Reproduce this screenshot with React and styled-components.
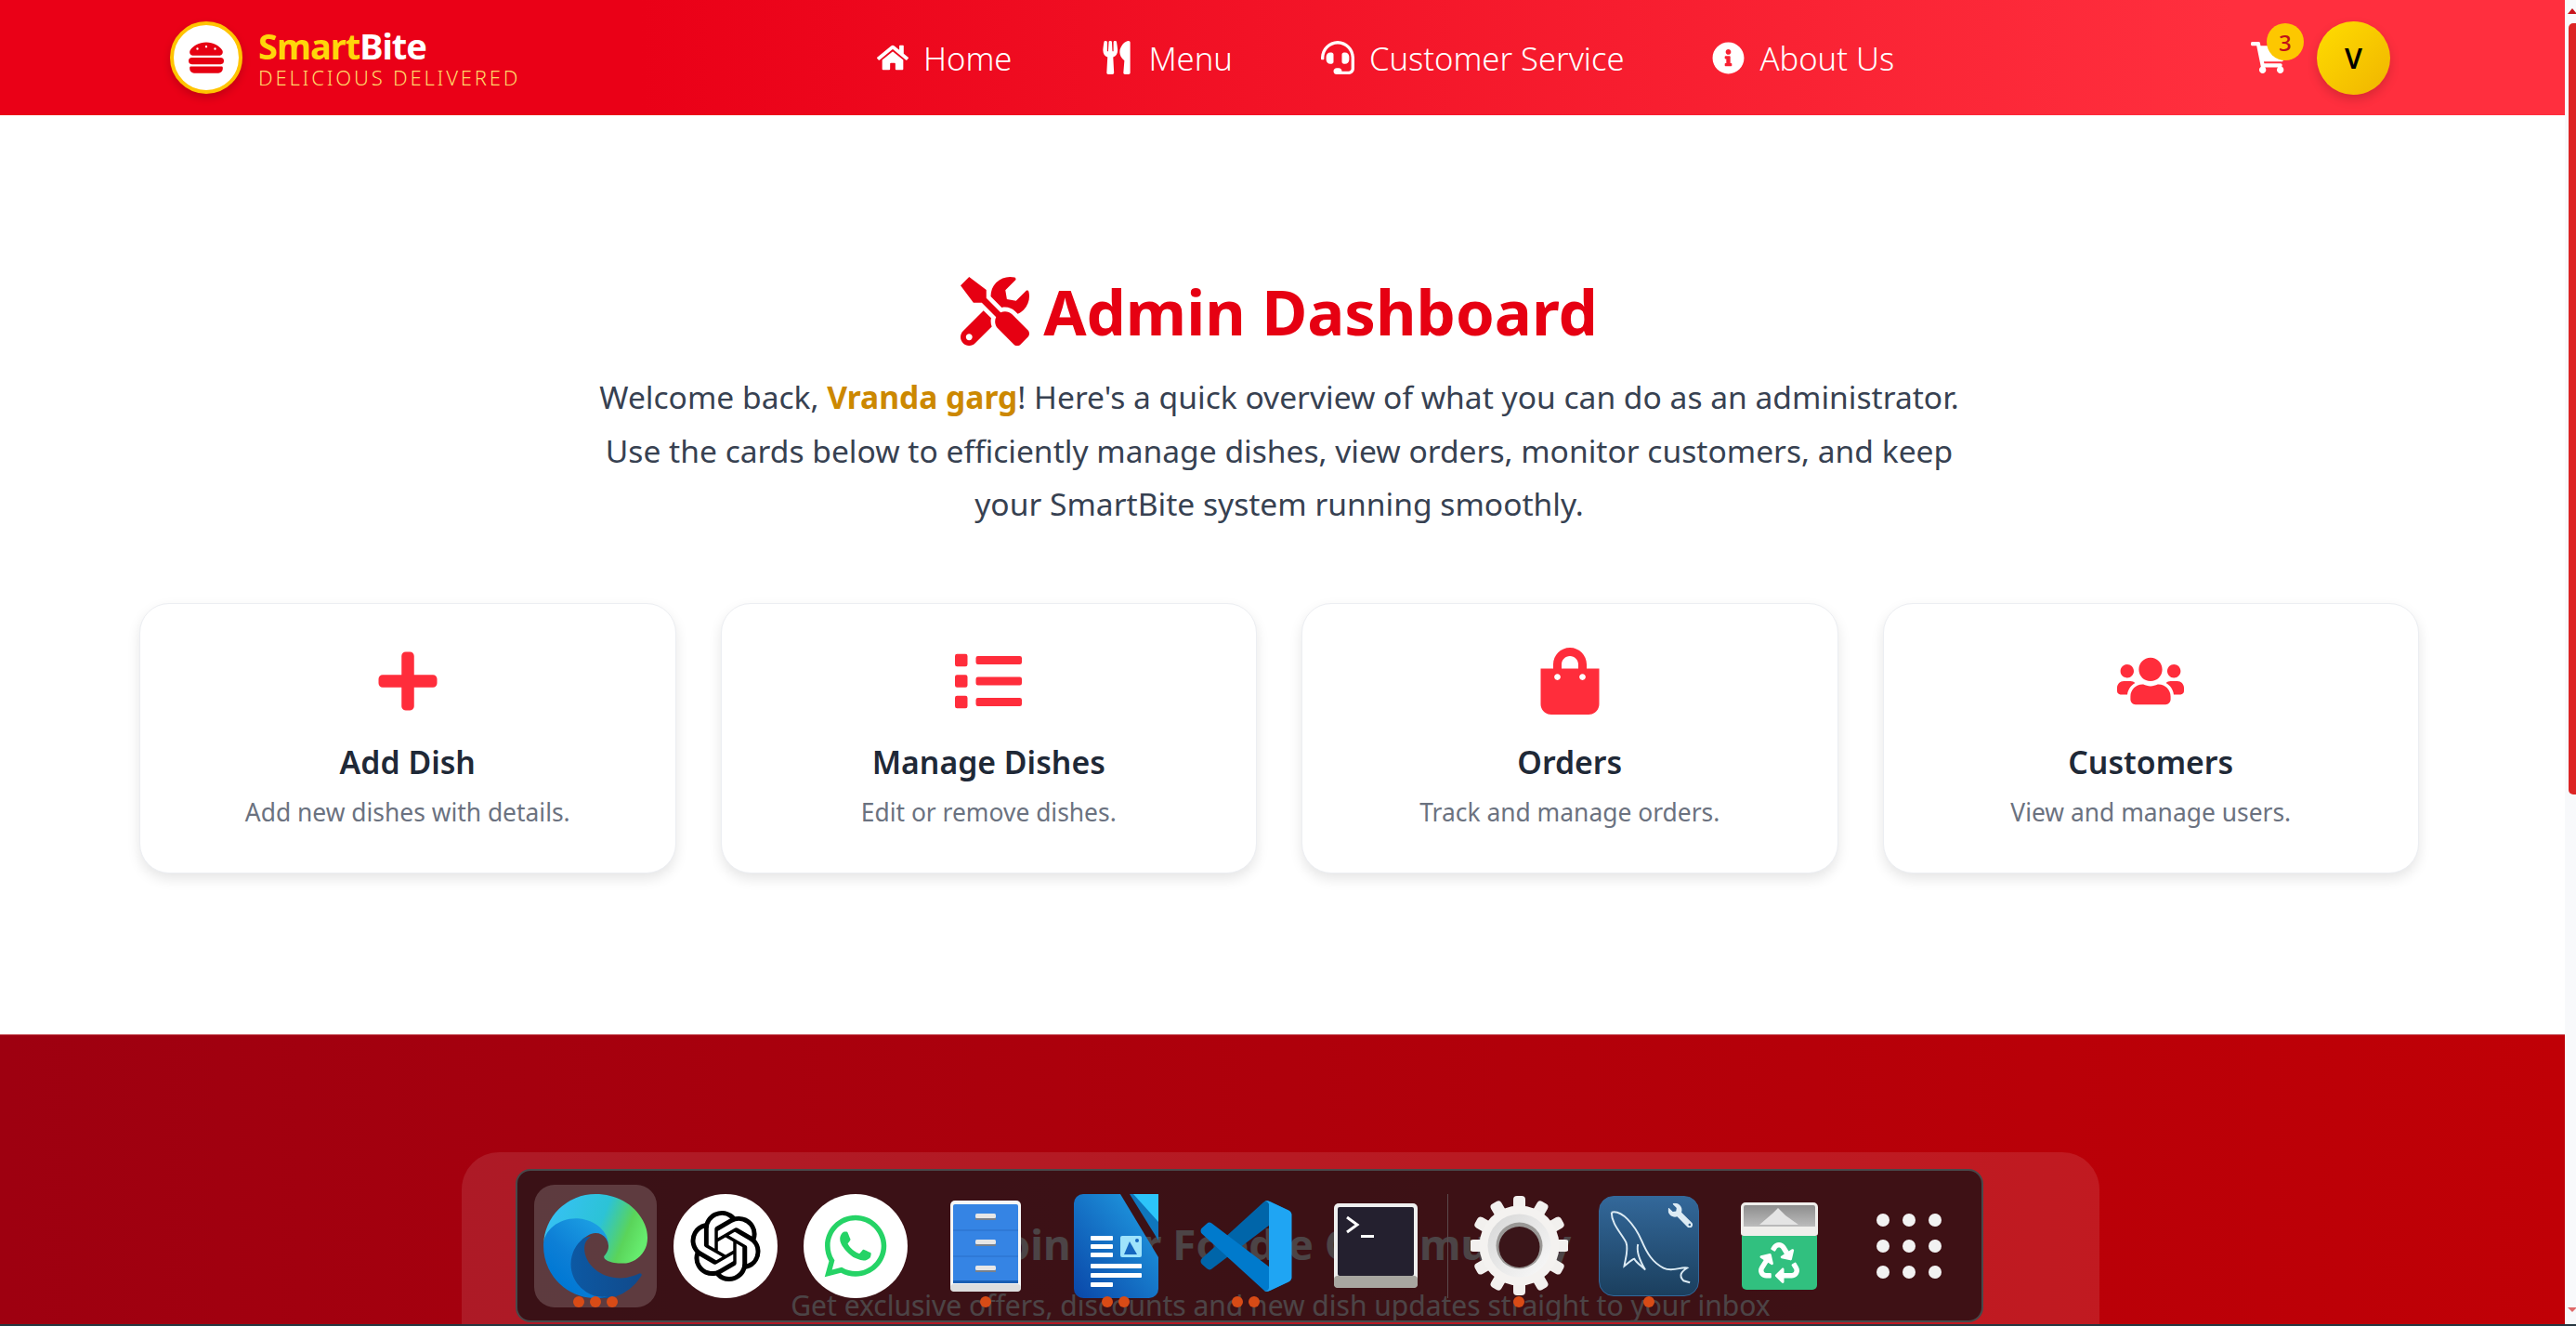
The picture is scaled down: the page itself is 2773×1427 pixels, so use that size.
import React from "react";
import styled, { createGlobalStyle } from "styled-components";
import {
  FaHamburger,
  FaHome,
  FaUtensils,
  FaHeadset,
  FaInfoCircle,
  FaShoppingCart,
  FaTools,
  FaPlus,
  FaList,
  FaShoppingBag,
  FaUsers,
  FaWhatsapp,
  FaRecycle,
  FaWrench,
} from "react-icons/fa";
import { SiOpenai } from "react-icons/si";

const GlobalStyle = createGlobalStyle`
  html, body {
    margin: 0;
    padding: 0;
    height: 100%;
    overflow: hidden;
    background: #fff;
    font-family: "Noto Sans", "Open Sans", sans-serif;
  }
  * { box-sizing: border-box; }
`;

const Shell = styled.div`
  height: 100vh;
  display: flex;
  background: #fff;
`;

const Page = styled.div`
  flex: 1;
  min-width: 0;
  height: 100%;
  overflow: hidden;
`;

/* browser scrollbar */
const ScrollRail = styled.div`
  width: 12px;
  flex: none;
  display: flex;
  flex-direction: column;
  background: #f8f9fb;
`;

const ScrollArrow = styled.div`
  height: 25px;
  flex: none;
  padding: ${(p) => (p.$down ? "5px 0 0 3px" : "9px 0 0 3px")};

  &::after {
    content: "";
    display: block;
    width: 0;
    height: 0;
    border-left: 5px solid transparent;
    border-right: 5px solid transparent;
    ${(p) =>
      p.$down
        ? "border-top: 5px solid #e06a6a;"
        : "border-bottom: 6px solid #c9141c;"}
  }
`;

const ScrollThumb = styled.div`
  height: 830px;
  margin-left: 4px;
  border-radius: 5px 0 0 5px;
  background: #dd2525;
`;

const ScrollSpace = styled.div`
  flex: 1;
`;

/* navbar */
const Navbar = styled.header`
  height: 124px;
  padding: 0 188px 0 183px;
  display: flex;
  align-items: center;
  justify-content: space-between;
  background: linear-gradient(90deg, #ea0017 0%, #ea0017 25%, #ff2f3e 87%);
`;

const Brand = styled.div`
  display: flex;
  align-items: center;
  gap: 17px;
`;

const LogoBadge = styled.div`
  width: 78px;
  height: 78px;
  border-radius: 50%;
  background: #fff;
  border: 4px solid #ffc400;
  box-shadow: 0 4px 10px rgba(0, 0, 0, 0.18);
  display: flex;
  align-items: center;
  justify-content: center;
  color: #e60012;
`;

const BrandText = styled.div`
  display: flex;
  flex-direction: column;
`;

const BrandName = styled.div`
  font-size: 38px;
  line-height: 42px;
  font-weight: 700;
  letter-spacing: -1px;
  color: #fff;

  span {
    color: #ffd60a;
  }
`;

const BrandTag = styled.div`
  font-size: 22px;
  line-height: 26px;
  font-weight: 300;
  letter-spacing: 2.8px;
  color: #ffd96a;
  white-space: nowrap;
`;

const NavLinks = styled.nav`
  display: flex;
  align-items: center;
  gap: 95px;
`;

const NavLink = styled.a`
  display: flex;
  align-items: center;
  gap: 16px;
  font-size: 34.6px;
  font-weight: 300;
  color: #fff;
  white-space: nowrap;
`;

const NavRight = styled.div`
  display: flex;
  align-items: center;
  gap: 33px;
`;

const CartWrap = styled.div`
  position: relative;
  display: flex;
  color: #fff;
`;

const CartBadge = styled.span`
  position: absolute;
  top: -18px;
  left: 17px;
  width: 40px;
  height: 40px;
  border-radius: 50%;
  background: #fdc700;
  color: #c0101a;
  font-size: 24px;
  font-weight: 500;
  display: flex;
  align-items: center;
  justify-content: center;
`;

const Avatar = styled.div`
  width: 79px;
  height: 79px;
  border-radius: 50%;
  background: linear-gradient(135deg, #ffdd00, #f0b400);
  box-shadow: 0 5px 12px rgba(0, 0, 0, 0.16);
  color: #000;
  font-size: 30px;
  font-weight: 600;
  display: flex;
  align-items: center;
  justify-content: center;
`;

/* main */
const Main = styled.main`
  padding: 166px 157px 173px 150px;
`;

const Title = styled.h1`
  margin: 0;
  display: flex;
  align-items: center;
  justify-content: center;
  gap: 15px;
  font-size: 67px;
  line-height: 90px;
  font-weight: 700;
  color: #e60012;
`;

const Intro = styled.p`
  width: 1500px;
  margin: 19px auto 0;
  text-align: center;
  font-size: 33.6px;
  line-height: 57.6px;
  font-weight: 400;
  color: #374151;

  strong {
    color: #cc8800;
    font-weight: 700;
  }
`;

const CardGrid = styled.section`
  margin-top: 77px;
  display: grid;
  grid-template-columns: repeat(4, 1fr);
  gap: 48px;
`;

const Card = styled.article`
  height: 291px;
  padding-top: 47px;
  border-radius: 32px;
  border: 1px solid #eceef2;
  background: #fff;
  box-shadow: 0 6px 14px rgba(0, 0, 0, 0.1);
  display: flex;
  flex-direction: column;
  align-items: center;
`;

const CardIcon = styled.div`
  height: 72px;
  display: flex;
  align-items: center;
  justify-content: center;
  color: #ff2d3b;
`;

const CardTitle = styled.h3`
  margin: 28px 0 0;
  font-size: 33.8px;
  line-height: 46px;
  font-weight: 600;
  color: #1f2937;
`;

const CardText = styled.p`
  margin: 11px 0 0;
  font-size: 26.4px;
  line-height: 40px;
  font-weight: 400;
  color: #6b7280;
`;

/* footer, continues below the fold */
const Footer = styled.footer`
  height: 400px;
  padding: 126px 0 0 497px;
  border-top: 1px solid #c5525a;
  background: linear-gradient(90deg, #9e0010, #c00006);
`;

const Newsletter = styled.section`
  width: 1763px;
  padding-top: 68px;
  height: 500px;
  border-radius: 40px;
  background: rgba(255, 255, 255, 0.1);
  text-align: center;
  color: #fff;
`;

const NewsTitle = styled.h2`
  margin: 0;
  font-size: 45.6px;
  line-height: 60px;
  font-weight: 700;
`;

const NewsText = styled.p`
  margin: 7px 0 0;
  font-size: 30px;
  line-height: 60px;
  font-weight: 400;
`;

/* desktop dock lying over the page */
const Dock = styled.div`
  position: fixed;
  left: 555px;
  bottom: 4px;
  width: 1580px;
  height: 165px;
  padding: 0 14px;
  display: flex;
  align-items: center;
  border-radius: 16px;
  border: 2px solid #48484a;
  background: rgba(25, 16, 18, 0.78);
`;

const DockItem = styled.div`
  position: relative;
  width: 140px;
  height: 132px;
  flex: none;
  display: flex;
  align-items: center;
  justify-content: center;

  &::before {
    content: "";
    display: ${(p) => (p.$active ? "block" : "none")};
    position: absolute;
    inset: 0 4px;
    border-radius: 22px;
    background: rgba(255, 255, 255, 0.18);
  }
  svg {
    position: relative;
  }
`;

const DockSeparator = styled.div`
  width: 1px;
  height: 112px;
  margin: 0 6px 0 7px;
  flex: none;
  background: #5a4a4c;
`;

const Dots = styled.div`
  position: absolute;
  left: 0;
  right: 0;
  bottom: 0;
  display: flex;
  justify-content: center;
  gap: 6px;

  i {
    width: 12px;
    height: 12px;
    border-radius: 50%;
    background: #d84b16;
  }
`;

const RoundIcon = styled.div`
  width: 112px;
  height: 112px;
  border-radius: 50%;
  background: #fff;
  color: ${(p) => p.$color};
  display: flex;
  align-items: center;
  justify-content: center;
`;

const AppGrid = styled.div`
  display: grid;
  grid-template-columns: repeat(3, 14px);
  grid-auto-rows: 14px;
  gap: 14px;

  i {
    border-radius: 50%;
    background: #f2f2f2;
  }
`;

const WindowEdge = styled.div`
  position: fixed;
  left: 0;
  right: 0;
  bottom: 0;
  height: 2px;
  background: #263640;
`;

const EdgeIcon = () => (
  <svg width="112" height="112" viewBox="0 0 256 256">
    <defs>
      <linearGradient id="edgeA" x1="63" y1="180" x2="241" y2="180" gradientUnits="userSpaceOnUse">
        <stop offset="0" stopColor="#0c59a4" />
        <stop offset="1" stopColor="#114a8b" />
      </linearGradient>
      <linearGradient id="edgeB" x1="153" y1="100" x2="42" y2="220" gradientUnits="userSpaceOnUse">
        <stop offset="0" stopColor="#1b9de2" />
        <stop offset="0.6" stopColor="#0d7fd6" />
        <stop offset="1" stopColor="#0078d4" />
      </linearGradient>
      <linearGradient id="edgeC" x1="26" y1="49" x2="238" y2="135" gradientUnits="userSpaceOnUse">
        <stop offset="0" stopColor="#35c1f1" />
        <stop offset="0.5" stopColor="#2cc3d6" />
        <stop offset="0.8" stopColor="#5ad45a" />
        <stop offset="1" stopColor="#66eb6e" />
      </linearGradient>
    </defs>
    <path fill="url(#edgeA)" d="M235.7 195.5a93.7 93.7 0 0 1-10.6 4.7 101.9 101.9 0 0 1-35.9 6.4c-47.3 0-88.5-32.5-88.5-74.3a31.5 31.5 0 0 1 16.4-27.3c-42.8 1.8-53.8 46.4-53.8 72.5 0 73.9 68.1 81.4 82.8 81.4 7.9 0 19.8-2.3 27-4.6l1.3-.4a128.3 128.3 0 0 0 66.6-52.8 4 4 0 0 0-5.3-5.6z" />
    <path fill="url(#edgeB)" d="M105.7 241.4A79.2 79.2 0 0 1 83 220a80.7 80.7 0 0 1 29.5-120c3.2-1.5 8.5-4.1 15.6-4a32.4 32.4 0 0 1 25.7 13 31.9 31.9 0 0 1 6.3 18.7c0-.2 24.5-79.6-80-79.6-43.9 0-80 41.6-80 78.2a130.2 130.2 0 0 0 12.1 56 128 128 0 0 0 156.4 67 75.5 75.5 0 0 1-62.9-8z" />
    <path fill="url(#edgeC)" d="M152.3 148.9c-.8 1-3.3 2.5-3.3 5.6 0 2.6 1.7 5.2 4.8 7.3 14.3 10 41.4 8.6 41.5 8.6a59.6 59.6 0 0 0 30.3-8.3 61.4 61.4 0 0 0 30.4-52.9c.3-22.4-8-37.3-11.3-43.9C223.5 23.9 177.7 0 128 0A128 128 0 0 0 0 126.2c.5-36.5 36.8-66 80-66 3.5 0 23.5.3 42 10a72.6 72.6 0 0 1 30.9 29.3c6.1 10.6 7.2 24.1 7.2 29.5s-2.7 13.3-7.8 19.9z" />
  </svg>
);

const FilesIcon = () => (
  <svg width="76" height="98" viewBox="0 0 76 98">
    <rect x="0" y="0" width="76" height="98" rx="5" fill="#f6f6f6" />
    <rect x="0" y="90" width="76" height="8" rx="4" fill="#dedede" />
    <rect x="3" y="4" width="70" height="85" rx="2" fill="#3584e4" />
    <path d="M3 32h70M3 60h70" stroke="#2a6fc8" strokeWidth="1" />
    <rect x="3" y="86" width="70" height="3" fill="#1a5fb4" />
    {[14, 42, 70].map((y) => (
      <g key={y}>
        <rect x="27" y={y} width="22" height="5" rx="1.5" fill="#e6e6e6" />
        <rect x="27" y={y + 5} width="22" height="2" fill="#77808c" />
      </g>
    ))}
  </svg>
);

const WriterIcon = () => (
  <svg width="91" height="112" viewBox="0 0 91 112">
    <defs>
      <linearGradient id="writerBody" x1="0" y1="1" x2="1" y2="0">
        <stop offset="0" stopColor="#0a46a8" />
        <stop offset="1" stopColor="#21a2e6" />
      </linearGradient>
    </defs>
    <path d="M10 0h40l41 68v34a10 10 0 0 1-10 10H10a10 10 0 0 1-10-10V10A10 10 0 0 1 10 0z" fill="url(#writerBody)" />
    <path d="M60 0h31v50z" fill="#0f76bd" />
    <path d="M64 0h27v30z" fill="#2cc4fa" />
    <g fill="#fff">
      <rect x="18" y="45" width="24" height="5" rx="1" />
      <rect x="18" y="54" width="24" height="5" rx="1" />
      <rect x="18" y="63" width="24" height="5" rx="1" />
      <rect x="18" y="75" width="55" height="5" rx="1" />
      <rect x="18" y="85" width="55" height="5" rx="1" />
      <rect x="18" y="95" width="24" height="5" rx="1" />
    </g>
    <rect x="50" y="45" width="23" height="23" rx="2" fill="#9fe3fb" />
    <path d="M54 65l6-14 8 14z" fill="#1667c0" />
    <circle cx="68" cy="50" r="2" fill="#1667c0" />
  </svg>
);

const CodeIcon = () => (
  <svg width="99" height="98" viewBox="0 0 100 100">
    <path fill="#0065a9" d="M96.5 10.8 75.9.9a6.2 6.2 0 0 0-7.1 1.2L1.4 63.6a4.2 4.2 0 0 0 0 6.2l5.5 5a4.2 4.2 0 0 0 5.3.2L93.3 13.5c2.7-2.1 6.7-.1 6.7 3.3v-.2a6.2 6.2 0 0 0-3.5-5.8z" />
    <path fill="#007acc" d="M96.5 89.2 75.9 99.1a6.2 6.2 0 0 1-7.1-1.2L1.4 36.4a4.2 4.2 0 0 1 0-6.2l5.5-5a4.2 4.2 0 0 1 5.3-.2l81.1 61.5c2.7 2.1 6.7.1 6.7-3.3v.2a6.2 6.2 0 0 1-3.5 5.8z" />
    <path fill="#1fa5f3" d="M75.9 99.1a6.2 6.2 0 0 1-7.1-1.2c2.3 2.3 6.2.7 6.2-2.6V4.7c0-3.3-3.9-4.9-6.2-2.6a6.2 6.2 0 0 1 7.1-1.2l20.6 9.9a6.2 6.2 0 0 1 3.5 5.6v67.2a6.2 6.2 0 0 1-3.5 5.6z" />
  </svg>
);

const TerminalIcon = () => (
  <svg width="90" height="91" viewBox="0 0 90 91">
    <rect width="90" height="91" rx="5" fill="#efefef" />
    <rect y="78" width="90" height="13" rx="4" fill="#a8a6a0" />
    <rect x="4" y="4" width="82" height="74" rx="2" fill="#24202f" />
    <path d="M14 15l11 8-11 8" fill="none" stroke="#fff" strokeWidth="3" />
    <rect x="29" y="34" width="14" height="3" fill="#fff" />
  </svg>
);

const GearIcon = () => {
  const teeth = Array.from({ length: 12 }, (_, i) => i * 30);
  return (
    <svg width="105" height="107" viewBox="0 0 105 107">
      <defs>
        <linearGradient id="gearRing" x1="0" y1="0" x2="1" y2="1">
          <stop offset="0" stopColor="#d6d6d6" />
          <stop offset="1" stopColor="#fafafa" />
        </linearGradient>
      </defs>
      {teeth.map((a) => (
        <rect key={a} x="46" y="0" width="13" height="24" rx="4" fill="#f2f0ee" transform={`rotate(${a} 52.5 53.5)`} />
      ))}
      <circle cx="52.5" cy="53.5" r="43" fill="#f4f2f0" />
      <circle cx="52.5" cy="53.5" r="34" fill="url(#gearRing)" />
      <circle cx="52.5" cy="53.5" r="25" fill="#9a9896" />
      <circle cx="52.5" cy="55" r="22" fill="#3a1519" />
    </svg>
  );
};

const MysqlTile = styled.div`
  width: 108px;
  height: 108px;
  border-radius: 16px;
  border: 1px solid #33689a;
  background: linear-gradient(#33689a, #1b3f5e);
  color: #dcebf4;
  overflow: hidden;
`;

const MysqlIcon = () => (
  <MysqlTile>
    <svg width="106" height="106" viewBox="0 0 108 108">
      <path
        d="M13 17C24 14 38 30 46 48C52 62 58 72 70 78C80 83 90 76 96 78C90 82 86 86 92 92L99 94"
        fill="none"
        stroke="#dcebf4"
        strokeWidth="2"
      />
      <path
        d="M13 17C13 30 24 40 29 50C32 58 28 68 27 76C32 72 36 68 38 68C40 72 46 76 50 80C44 70 40 60 42 52"
        fill="none"
        stroke="#dcebf4"
        strokeWidth="2"
      />
      <g transform="translate(102 7) scale(-1 1)">
        <FaWrench size={27} />
      </g>
    </svg>
  </MysqlTile>
);

const TrashBin = styled.div`
  width: 83px;
  height: 94px;
  display: flex;
  flex-direction: column;
`;

const TrashLid = styled.div`
  height: 36px;
  border-radius: 5px 5px 3px 3px;
  border: 3px solid #f0efec;
  border-bottom-width: 10px;
  background: linear-gradient(180deg, #8d8d8d, #bcbcbc);
  display: flex;
  align-items: center;
  justify-content: center;
`;

const TrashBody = styled.div`
  flex: 1;
  margin: 0 1px;
  border-radius: 0 0 5px 5px;
  background: #31c07f;
  color: #fff;
  display: flex;
  align-items: center;
  justify-content: center;
`;

const dockApps = [
  { key: "edge", dots: 3, active: true, icon: <EdgeIcon /> },
  { key: "chatgpt", dots: 0, icon: <RoundIcon $color="#000"><SiOpenai size={76} /></RoundIcon> },
  { key: "whatsapp", dots: 0, icon: <RoundIcon $color="#25d366"><FaWhatsapp size={76} /></RoundIcon> },
  { key: "files", dots: 1, icon: <FilesIcon /> },
  { key: "writer", dots: 2, icon: <WriterIcon /> },
  { key: "code", dots: 2, icon: <CodeIcon /> },
  { key: "terminal", dots: 0, icon: <TerminalIcon /> },
];

const dockAppsRight = [
  { key: "settings", dots: 1, icon: <GearIcon /> },
  { key: "mysql", dots: 1, icon: <MysqlIcon /> },
  {
    key: "trash",
    dots: 0,
    icon: (
      <TrashBin>
        <TrashLid>
          <svg width="50" height="20" viewBox="0 0 50 20"><path d="M4 20l14-12 6-6 8 8 14 10z" fill="#e4e4e4" /></svg>
        </TrashLid>
        <TrashBody><FaRecycle size={44} /></TrashBody>
      </TrashBin>
    ),
  },
  {
    key: "apps",
    dots: 0,
    icon: <AppGrid>{Array.from({ length: 9 }, (_, i) => <i key={i} />)}</AppGrid>,
  },
];

const renderDockApp = (app) => (
  <DockItem key={app.key} $active={app.active}>
    {app.icon}
    {app.dots > 0 && (
      <Dots>{Array.from({ length: app.dots }, (_, i) => <i key={i} />)}</Dots>
    )}
  </DockItem>
);

const cards = [
  { title: "Add Dish", text: "Add new dishes with details.", Icon: FaPlus },
  { title: "Manage Dishes", text: "Edit or remove dishes.", Icon: FaList },
  { title: "Orders", text: "Track and manage orders.", Icon: FaShoppingBag },
  { title: "Customers", text: "View and manage users.", Icon: FaUsers },
];

const App = () => (
  <Shell>
    <GlobalStyle />
    <Page>
      <Navbar>
        <Brand>
          <LogoBadge><FaHamburger size={38} /></LogoBadge>
          <BrandText>
            <BrandName><span>Smart</span>Bite</BrandName>
            <BrandTag>DELICIOUS DELIVERED</BrandTag>
          </BrandText>
        </Brand>
        <NavLinks>
          <NavLink><FaHome size={34} />Home</NavLink>
          <NavLink><FaUtensils size={36} />Menu</NavLink>
          <NavLink><FaHeadset size={36} />Customer Service</NavLink>
          <NavLink><FaInfoCircle size={35} />About Us</NavLink>
        </NavLinks>
        <NavRight>
          <CartWrap>
            <FaShoppingCart size={38} />
            <CartBadge>3</CartBadge>
          </CartWrap>
          <Avatar>V</Avatar>
        </NavRight>
      </Navbar>

      <Main>
        <Title><FaTools size={74} />Admin Dashboard</Title>
        <Intro>
          Welcome back, <strong>Vranda garg</strong>! Here's a quick overview of what you can do as an administrator.
          <br />
          Use the cards below to efficiently manage dishes, view orders, monitor customers, and keep
          <br />
          your SmartBite system running smoothly.
        </Intro>
        <CardGrid>
          {cards.map(({ title, text, Icon }) => (
            <Card key={title}>
              <CardIcon><Icon size={72} /></CardIcon>
              <CardTitle>{title}</CardTitle>
              <CardText>{text}</CardText>
            </Card>
          ))}
        </CardGrid>
      </Main>

      <Footer>
        <Newsletter>
          <NewsTitle>Join Our Foodie Community</NewsTitle>
          <NewsText>Get exclusive offers, discounts and new dish updates straight to your inbox</NewsText>
        </Newsletter>
      </Footer>
    </Page>

    <ScrollRail>
      <ScrollArrow />
      <ScrollThumb />
      <ScrollSpace />
      <ScrollArrow $down />
    </ScrollRail>

    <Dock>
      {dockApps.map(renderDockApp)}
      <DockSeparator />
      {dockAppsRight.map(renderDockApp)}
    </Dock>
    <WindowEdge />
  </Shell>
);

export default App;
